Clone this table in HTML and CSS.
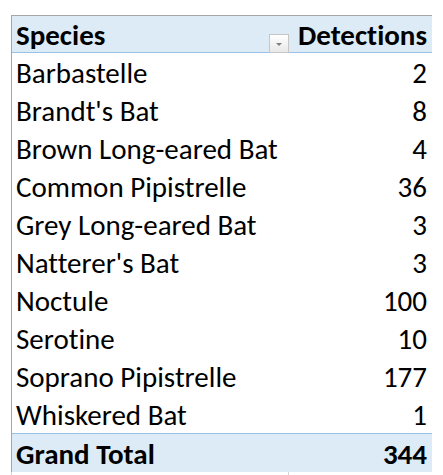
FILE: index.html
```html
<!DOCTYPE html>
<html>
<head>
<meta charset="utf-8">
<link rel="stylesheet" href="styles.css">
</head>
<body>
<div class="sheet">
  <div class="pivot">
    <div class="row head">
      <div class="c1">Species<span class="dd"><svg width="8" height="5" viewBox="0 0 8 5"><path d="M1 1 L7 1 L4 4 Z" fill="#7f7f7f"/></svg></span></div>
      <div class="c2">Detections</div>
    </div>
    <div class="row"><div class="c1">Barbastelle</div><div class="c2">2</div></div>
    <div class="row"><div class="c1">Brandt's Bat</div><div class="c2">8</div></div>
    <div class="row"><div class="c1">Brown Long-eared Bat</div><div class="c2">4</div></div>
    <div class="row"><div class="c1">Common Pipistrelle</div><div class="c2">36</div></div>
    <div class="row"><div class="c1">Grey Long-eared Bat</div><div class="c2">3</div></div>
    <div class="row"><div class="c1">Natterer's Bat</div><div class="c2">3</div></div>
    <div class="row"><div class="c1">Noctule</div><div class="c2">100</div></div>
    <div class="row"><div class="c1">Serotine</div><div class="c2">10</div></div>
    <div class="row"><div class="c1">Soprano Pipistrelle</div><div class="c2">177</div></div>
    <div class="row"><div class="c1">Whiskered Bat</div><div class="c2">1</div></div>
    <div class="row total"><div class="c1">Grand Total</div><div class="c2">344</div></div>
  </div>
  <div class="grid-below">
    <div class="g1"></div>
    <div class="g2"></div>
  </div>
</div>
</body>
</html>
```
FILE: styles.css
```css
html, body {
  margin: 0;
  padding: 0;
  background: #ffffff;
}
.sheet {
  padding: 15px 0 0 11px;
  width: 421px;
  font-family: Carlito, Lato, "Noto Sans", sans-serif;
  font-variant-ligatures: none;
  color: #000;
}
.pivot {
  border-top: 1px solid #a6a6a6;
  border-left: 1px solid #a6a6a6;
}
.row {
  display: grid;
  grid-template-columns: 278px 142px;
  height: 38px;
  align-items: center;
  font-size: 29px;
  line-height: 38px;
}
.row.head {
  height: 36px;
  line-height: 36px;
  background: #ddebf7;
  border-bottom: 1px solid #9bc2e6;
  font-weight: bold;
}
.row.total {
  height: 38px;
  background: #ddebf7;
  border-top: 1px solid #9bc2e6;
  font-weight: bold;
}
.c1 {
  padding-left: 4px;
  padding-top: 1px;
  display: flex;
  align-items: center;
  justify-content: space-between;
  white-space: nowrap;
}
.c2 {
  text-align: right;
  padding-right: 5px;
  padding-top: 1px;
  white-space: nowrap;
}
.dd {
  width: 18px;
  height: 17px;
  margin-top: 16px;
  margin-right: 1px;
  border: 1px solid #c6c6c6;
  background: linear-gradient(#ffffff, #e8e8e8);
  display: flex;
  align-items: center;
  justify-content: center;
}
.dd svg { display: block; margin-top: 3px; }
.grid-below {
  display: grid;
  grid-template-columns: 278px 142px;
  height: 10px;
}
.g1 { border-left: 1px solid #d4d4d4; border-right: 1px solid #d4d4d4; }
```
